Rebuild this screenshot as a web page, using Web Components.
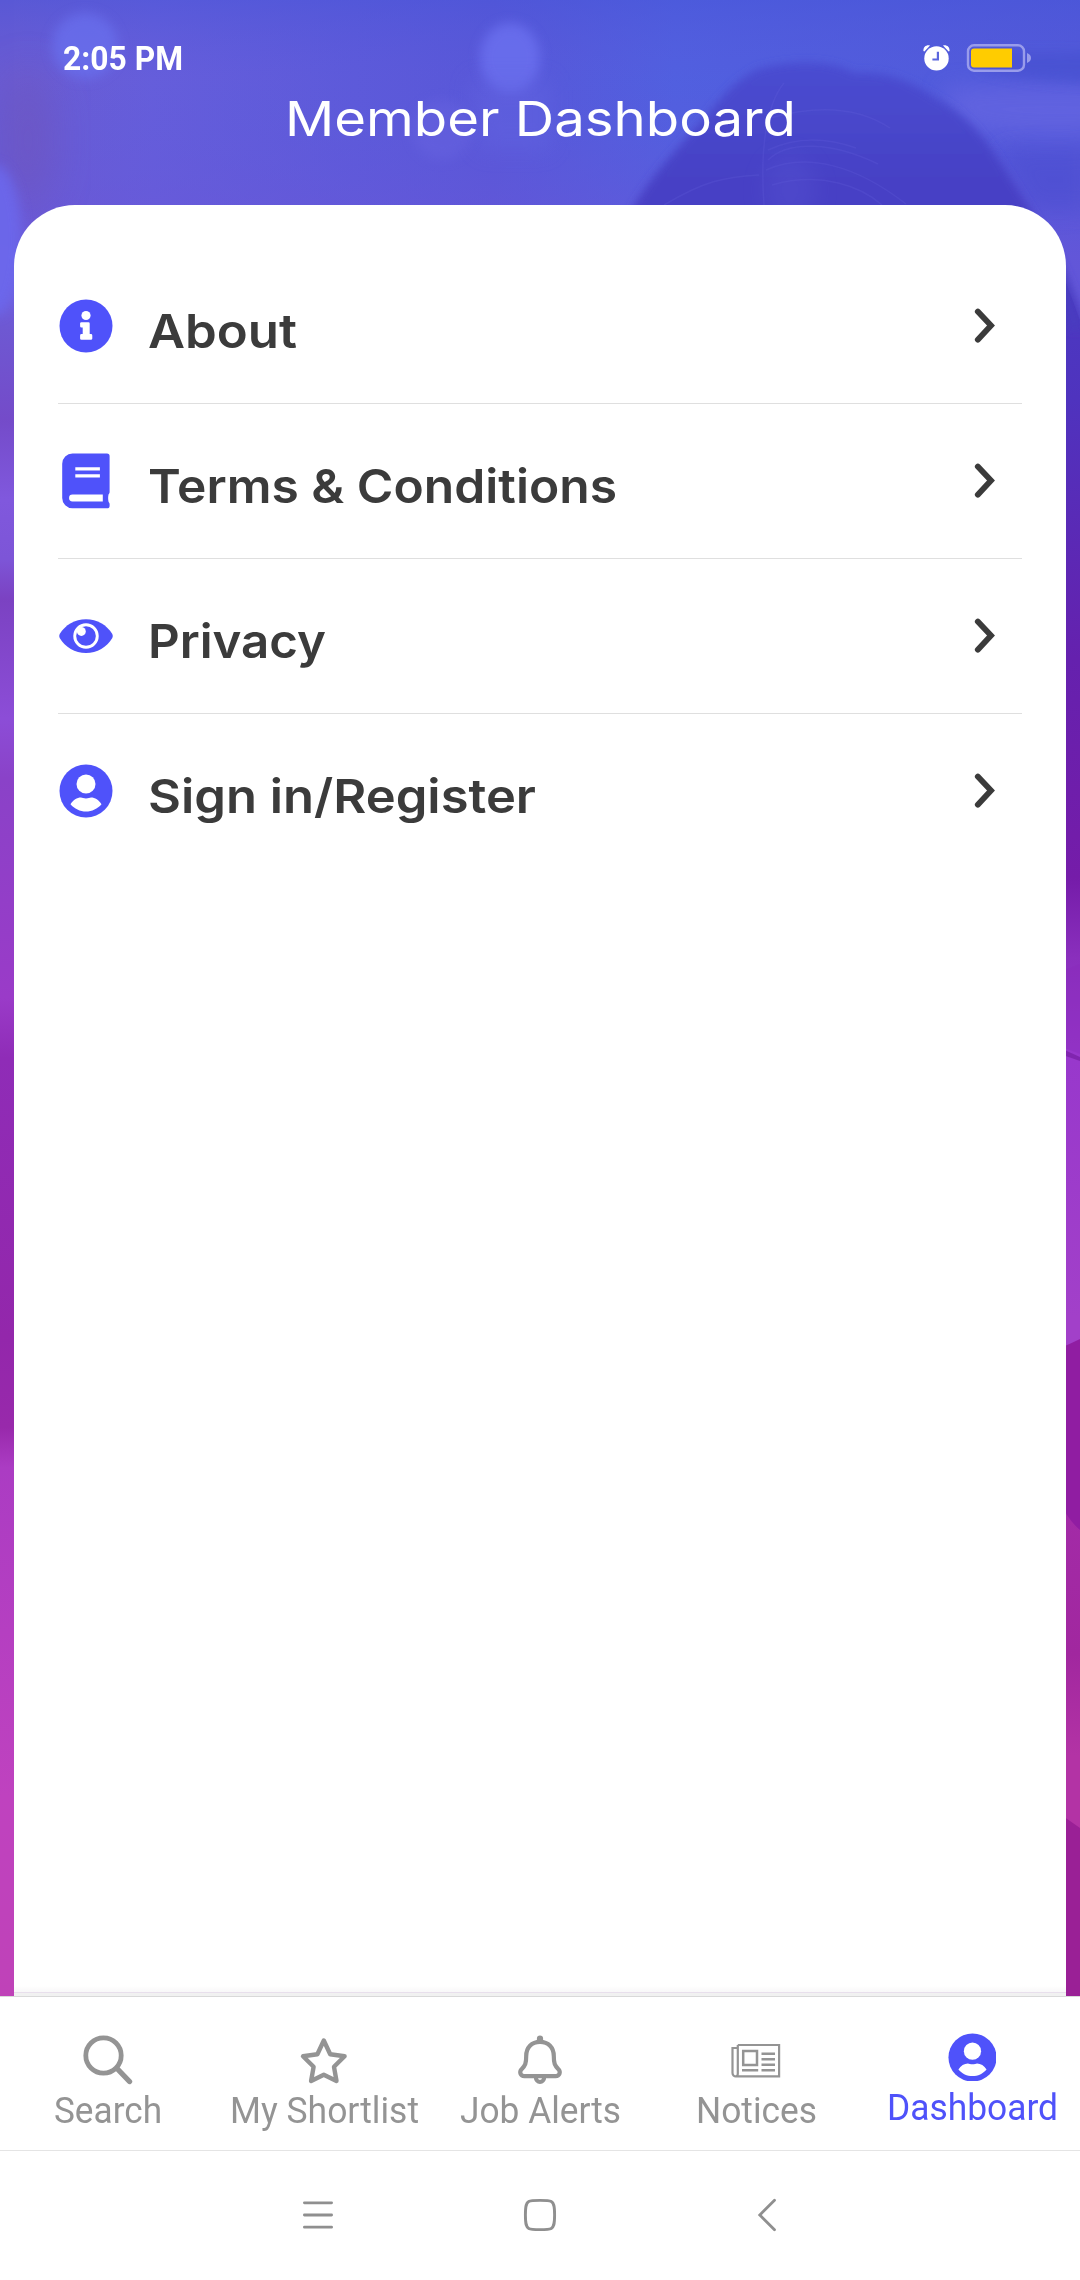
<!DOCTYPE html>
<html lang="en">
<head>
<meta charset="utf-8">
<title>Member Dashboard</title>
<style>
  body { margin: 0; }
</style>
</head>
<body>
<member-app></member-app>
<script>
// Inline icon set, each drawn at its natural pixel size.
const ICONS = {
  info: `<svg width="54" height="54" viewBox="0 0 54 54"><circle cx="27" cy="27" r="26.500" fill="currentColor"/><circle cx="27" cy="16.500" r="4.600" fill="#fff"/><path d="M22.500 23.200h7a1.200 1.200 0 0 1 1.200 1.200V35h1.200a1.400 1.400 0 0 1 1.400 1.400v3a1.400 1.400 0 0 1-1.400 1.400h-9.400a1.400 1.400 0 0 1-1.400-1.400v-3a1.400 1.400 0 0 1 1.400-1.400h1.200v-6.400h-1.200a1.400 1.400 0 0 1-1.400-1.400v-2.200a1.400 1.400 0 0 1 1.400-1.800z" fill="#fff"/></svg>`,
  book: `<svg width="54" height="56" viewBox="0 0 54 56"><path fill="currentColor" fill-rule="evenodd" d="M13.500 .5h34.500a2.600 2.600 0 0 1 2.600 2.600v36.200a2.600 2.600 0 0 1-1 2c-.6 2.200-.6 5.400 0 7.600a2.600 2.600 0 0 1 1 2v1.800a2.600 2.600 0 0 1-2.600 2.600H13.500A10.300 10.300 0 0 1 3.200 45V10.800A10.300 10.300 0 0 1 13.500 .5zM16.300 14.300v3.300h24.600v-3.300zM16.300 21.200v3.300h24.600v-3.300zM13.500 41.600a3.450 3.450 0 0 0 0 6.900H43.800v-6.900z"/></svg>`,
  eye: `<svg width="54" height="36" viewBox="0 0 56 36" style="overflow:visible"><path fill="currentColor" d="M.7 16C6.400 6.300 16.500.5 28 .5S49.600 6.300 55.300 16q1 2 0 4C49.600 29.700 39.500 35.500 28 35.500S6.400 29.700.7 20q-1-2 0-4z"/><circle cx="28" cy="18" r="11.700" fill="currentColor" stroke="#fff" stroke-width="3"/><circle cx="23.200" cy="13.300" r="4.600" fill="#fff"/></svg>`,
  user: `<svg width="54" height="54" viewBox="0 0 54 54"><circle cx="27" cy="27" r="26.500" fill="currentColor"/><circle cx="27" cy="20" r="9.500" fill="#fff"/><path fill="#fff" d="M11.500 40.200C14 36 18 33.500 22 33.500c1.200 0 2.700.9 5 .9s3.800-.9 5-.9c4 0 8 2.500 10.500 6.700C38.500 44.800 33 47.500 27 47.500s-11.500-2.700-15.500-7.300z"/></svg>`,
  chevron: `<svg width="24" height="38" viewBox="0 0 24 38"><path d="M4.800 4.500 18 18.600 4.800 32.700" fill="none" stroke="currentColor" stroke-width="5.800" stroke-linecap="round"/></svg>`,
  search: `<svg width="50" height="50" viewBox="0 0 50 50"><circle cx="20.500" cy="20.500" r="17.700" fill="none" stroke="currentColor" stroke-width="4.800"/><path d="m34.500 34 12 12.500" stroke="currentColor" stroke-width="5.400" stroke-linecap="round"/></svg>`,
  star: `<svg width="50" height="50" viewBox="0 0 50 50"><path d="m24.800 5.500 6.400 13.700 14.400 2.100-10.600 10.500 2.500 14.200-12.700-6.300-12.700 6.300 2.500-14.200L4 21.300l14.400-2.100z" fill="none" stroke="currentColor" stroke-width="4.400" stroke-linejoin="round"/></svg>`,
  bell: `<svg width="50" height="50" viewBox="0 0 50 50"><path d="M25 6.800c-8.400 0-13.800 5.800-13.800 14.200 0 7.500-.9 9.600-4.600 13.200-2.600 2.900-1.200 6.900 2.800 6.900h31.200c4 0 5.400-4 2.800-6.900-3.700-3.600-4.600-5.700-4.600-13.200C38.800 12.600 33.400 6.800 25 6.800z" fill="none" stroke="currentColor" stroke-width="4.200"/><path d="M21.900 6V3.500a3.100 3.100 0 0 1 6.200 0V6zM18.800 42.500a6.200 6.500 0 0 0 12.400 0h-4.100a2.100 2.400 0 0 1-4.200 0z" fill="currentColor"/></svg>`,
  news: `<svg width="50" height="50" viewBox="0 0 50 50"><g fill="none" stroke="currentColor" stroke-width="2.200"><path d="M6.800 10h41.300v31.400H4.800a3.300 3.300 0 0 1-3.300-3.300V13H6.800M6.800 10v28.400q0 2.700-1.600 3"/><path stroke-width="2.500" d="M12.200 15.900h13.800v14H12.200zM30.500 18.700h13.500M30.500 24.200h13.500M30.500 29.800h13.500M30.500 35.300h13.500M11 35.300H27.200"/></g></svg>`,
  menu: `<svg width="32" height="32" viewBox="0 0 32 32"><path d="M2.400 3.800h27.200M2.400 16h27.200M2.400 28.200h27.200" stroke="currentColor" stroke-width="2.800" stroke-linecap="round"/></svg>`,
  home: `<svg width="34" height="34" viewBox="0 0 34 34"><path d="M17 2.400c6.500 0 9.500.2 11.300 1.200 2.300 1.300 3.300 3.500 3.300 13.400s-1 12.100-3.300 13.400c-1.800 1-4.800 1.200-11.300 1.200s-9.500-.2-11.300-1.200C3.400 29.100 2.400 26.900 2.400 17s1-12.100 3.300-13.400C7.500 2.600 10.500 2.400 17 2.400z" fill="none" stroke="currentColor" stroke-width="2.900"/></svg>`,
  back: `<svg width="22" height="34" viewBox="0 0 22 34"><path d="M18.500 2.200 3.800 17l14.700 14.800" fill="none" stroke="currentColor" stroke-width="2.800" stroke-linecap="round"/></svg>`,
  alarm: `<svg width="28" height="28" viewBox="0 0 28 28"><circle cx="13.500" cy="14.400" r="12.200" fill="#fff"/><path d="M.4 7C.3 3 3 .800 7 1.500L1.400 7.600zM26.600 7C26.700 3 24 .800 20 1.500l5.600 6.100z" fill="#fff"/><path d="M14.900 7.800v7.700H9.400" fill="none" stroke="#5b66dd" stroke-width="2.200"/></svg>`,
  battery: `<svg width="67" height="30" viewBox="0 0 67 30"><rect x="2" y="2.300" width="56" height="25.400" rx="6" fill="none" stroke="#999ceb" stroke-width="2.400"/><path d="M61 10q4 1.700 4 5t-4 5z" fill="#999ceb"/><path d="M8 5.600h38v18.800H8a3 3 0 0 1-3-3V8.600a3 3 0 0 1 3-3z" fill="#fc0"/></svg>`
};

class BaseElement extends HTMLElement {
  constructor() { super(); this.attachShadow({ mode: 'open' }); }
  connectedCallback() { this.shadowRoot.innerHTML = this.render(); }
}

customElements.define('app-icon', class extends BaseElement {
  render() { return `<style>:host{display:flex;flex:none}svg{display:block}</style>${ICONS[this.getAttribute('name')]}`; }
});

// Single line of text whose advance is stretched to a set width.
customElements.define('fit-text', class extends BaseElement {
  render() { return `<style>:host{display:block;flex:none;white-space:nowrap}span{display:inline-block;transform-origin:0 50%}</style><span>${this.getAttribute('text')}</span>`; }
  connectedCallback() {
    super.connectedCallback();
    const span = this.shadowRoot.querySelector('span');
    const width = +this.getAttribute('width');
    this.style.width = width + 'px';
    span.style.transform = `scaleX(${width / span.getBoundingClientRect().width})`;
  }
});

customElements.define('photo-backdrop', class extends BaseElement {
  render() { return `<style>:host{display:block;position:absolute;inset:0;overflow:hidden}svg{display:block}</style>
  <svg width="1080" height="1996" viewBox="0 0 1080 1996">
    <defs>
      <linearGradient id="l" x2="0" y2="1">
        <stop offset="0" stop-color="#5957d6"/><stop offset=".12" stop-color="#6d68ea"/><stop offset=".165" stop-color="#6e58d2"/><stop offset=".21" stop-color="#744bc9"/><stop offset=".25" stop-color="#8058dd"/><stop offset=".28" stop-color="#7d55d7"/><stop offset=".3" stop-color="#7b42c2"/><stop offset=".36" stop-color="#8c4dd7"/><stop offset=".39" stop-color="#8a42c8"/><stop offset=".5" stop-color="#9a3bc8"/><stop offset=".53" stop-color="#8f2cb7"/><stop offset=".67" stop-color="#9327ab"/><stop offset=".715" stop-color="#9829ab"/><stop offset=".735" stop-color="#ab3cc3"/><stop offset=".9" stop-color="#bf42bf"/><stop offset="1" stop-color="#bf42b8"/>
      </linearGradient>
      <linearGradient id="r" x2="0" y2="1">
        <stop offset="0" stop-color="#5b50d8"/><stop offset=".13" stop-color="#4a3ac2"/><stop offset=".2" stop-color="#4f33be"/><stop offset=".33" stop-color="#6521ae"/><stop offset=".44" stop-color="#751ca9"/><stop offset=".48" stop-color="#8a2fbd"/><stop offset=".53" stop-color="#9838cc"/><stop offset=".66" stop-color="#a240c9"/>
      </linearGradient>
      <linearGradient id="r2" x2="0" y2="1"><stop offset="0" stop-color="#a32ba8"/><stop offset=".45" stop-color="#a1279f"/><stop offset=".75" stop-color="#b333a5"/></linearGradient>
      <linearGradient id="t"><stop offset="0" stop-color="#6b5cd2"/><stop offset=".13" stop-color="#665edb"/><stop offset=".32" stop-color="#5d5ada"/><stop offset=".45" stop-color="#5857d8"/><stop offset=".62" stop-color="#5060e0"/><stop offset="1" stop-color="#5058d9"/></linearGradient>
      <linearGradient id="v" x2="0" y2="1"><stop offset="0" stop-color="#4855d8" stop-opacity=".5"/><stop offset=".25" stop-color="#5a5ada" stop-opacity=".08"/><stop offset=".8" stop-color="#6e55d8" stop-opacity=".6"/></linearGradient>
      <linearGradient id="h" x2="0" y2="1"><stop offset="0" stop-color="#494dd1"/><stop offset=".4" stop-color="#4742c6"/><stop offset="1" stop-color="#4a3abf"/></linearGradient>
      <filter id="b6" x="-50%" y="-50%" width="200%" height="200%"><feGaussianBlur stdDeviation="6"/></filter>
      <filter id="b12" x="-50%" y="-50%" width="200%" height="200%"><feGaussianBlur stdDeviation="11"/></filter>
      <filter id="b20" x="-80%" y="-80%" width="260%" height="260%"><feGaussianBlur stdDeviation="20"/></filter>
      <filter id="b3"><feGaussianBlur stdDeviation="4"/></filter>
    </defs>
    <rect width="540" height="1996" fill="url(#l)"/>
    <rect x="540" width="540" height="1996" fill="url(#r)"/>
    <path d="M1060 972l20-8v90l-20-8z" fill="#8a2bbb" opacity=".4"/>
    <path d="M1060 1048l20 9v4l-20-7z" fill="#7a20a8" opacity=".8"/>
    <path d="M1060 1348q10-4 20-9v300h-20z" fill="#901da2"/>
    <path d="M1060 1502q8 18 20 28v310h-20z" fill="url(#r2)"/>
    <path d="M1060 1814l20 14v168h-20z" fill="#9a2096"/>
    <path d="M14 0h1066v320l-26-70H14z" fill="url(#t)"/>
    <path d="M0 0h14v250H0z" fill="#6a5bd2"/>
    <path d="M0 0h1080v320l-26-70H0z" fill="url(#v)"/>
    <ellipse cx="28" cy="140" rx="24" ry="70" fill="#7052b8" opacity=".55" filter="url(#b20)"/>
    <ellipse cx="-4" cy="240" rx="26" ry="75" fill="#6c68ec" opacity=".9" filter="url(#b6)"/>
    <circle cx="85" cy="46" r="33" fill="#6970ee" opacity=".75" filter="url(#b6)"/>
    <ellipse cx="510" cy="58" rx="30" ry="35" fill="#6b70ef" opacity=".85" filter="url(#b6)"/>
    <path d="M470 80h80v70h-70z" fill="#6465e2" opacity=".45" filter="url(#b12)"/>
    <circle cx="442" cy="130" r="30" fill="#6a66e2" opacity=".4" filter="url(#b6)"/>
    <path d="M940 88q80-6 170-3v50q-110 5-150-10z" fill="#6666e2" opacity=".7" filter="url(#b12)"/>
    <path d="M980 52q60 2 120 0v32q-80-4-120-14z" fill="#444fcf" opacity=".6" filter="url(#b6)"/>
    <path d="M1000 150h90v60h-60z" fill="#4a4ccf" opacity=".55" filter="url(#b12)"/>
    <path d="M622 230c22-52 60-84 96-128 12-14 22-24 40-33 40-10 75-8 96 4 35-2 55 8 80 24 45 24 62 58 90 102 18 30 44 66 62 131h-20l-20-90z" fill="url(#h)" filter="url(#b3)"/>
    <g fill="none" stroke="#6862dd" stroke-width="1.500" opacity=".22">
      <path d="M764 205c-4-55 2-100 20-122M768 160c20-20 65-18 110 4M766 170c40-18 90-5 140 34M768 150c30-14 60-12 88-2M664 205c40-24 60-28 95-30M772 185c50-14 90 2 110 20M770 118c50-14 90-10 120 10"/>
    </g>
    <ellipse cx="790" cy="190" rx="26" ry="34" fill="#5c58d6" opacity=".3" filter="url(#b12)"/>
  </svg>`; }
});

customElements.define('status-bar', class extends BaseElement {
  render() { return `<style>
    :host{display:flex;height:80px;box-sizing:border-box;padding:36px 47px 0 63px;color:#fff;align-items:flex-start}
    fit-text{font:700 32.500px/46px Roboto,sans-serif}
    .r{margin-left:auto;display:flex;gap:15px;padding-top:7px;align-items:center}
  </style><fit-text text="2:05 PM" width="120"></fit-text><div class="r"><app-icon name="alarm"></app-icon><app-icon name="battery"></app-icon></div>`; }
});

customElements.define('menu-row', class extends BaseElement {
  render() { return `<style>
    :host{display:flex;height:155px;box-sizing:border-box;border-bottom:1px solid #dfdfdf;align-items:center;color:#3b3b3b}
    :host([last]){border-color:transparent}
    .i{width:54px;display:flex;justify-content:center;color:#4f52fa;margin-left:.5px}
    fit-text{font:600 47px/60px Inter,sans-serif;margin:10px 0 0 35.500px}
    .c{margin:0 25px 0 auto}
  </style><div class="i"><app-icon name="${this.getAttribute('icon')}"></app-icon></div>
  <fit-text text="${this.getAttribute('label')}" width="${this.getAttribute('width')}"></fit-text>
  <app-icon class="c" name="chevron"></app-icon>`; }
});

customElements.define('menu-card', class extends BaseElement {
  render() { return `<style>
    :host{display:block;margin:57px 14px 0;height:1791px;box-sizing:border-box;background:linear-gradient(#fff 0 1781px,#f8f7f8 1787px,#e8dfec 1787px 1788px,#f1f1f1 1788px);border-radius:61px 61px 0 0;padding:44px 44px 0}
  </style><slot></slot>`; }
});

customElements.define('tab-item', class extends BaseElement {
  render() { return `<style>
    :host{display:flex;flex:1 1 0;min-width:0;flex-direction:column;align-items:center;padding-top:38px;color:#949494}
    :host([active]){color:#4f52fa;padding-top:35px}
    .i{height:50px;display:flex;align-items:center}
    :host([active]) app-icon{zoom:.907}
    fit-text{font:400 36px/44px Roboto,sans-serif;margin-top:4px}
  </style><div class="i"><app-icon name="${this.getAttribute('icon')}"></app-icon></div>
  <fit-text text="${this.getAttribute('label')}" width="${this.getAttribute('width')}"></fit-text>`; }
});

customElements.define('tab-bar', class extends BaseElement {
  render() { return `<style>:host{display:flex;height:155px;box-sizing:border-box;border-top:1px solid #d9d9d9;border-bottom:1px solid #e4e4e4;background:#fff}</style><slot></slot>`; }
});

customElements.define('system-nav', class extends BaseElement {
  render() { return `<style>:host{display:grid;grid-template-columns:221px 233px 22px;height:127px;box-sizing:border-box;align-items:center;padding-left:302px;color:#8f8f8f;background:#fff}</style>
  <app-icon name="menu"></app-icon><app-icon name="home"></app-icon><app-icon name="back"></app-icon>`; }
});

customElements.define('member-app', class extends BaseElement {
  render() { return `<style>
    :host{display:block;width:1080px;height:2280px;background:#fff;overflow:hidden}
    .screen{position:relative;height:1996px;overflow:hidden}
    .content{position:relative}
    header{height:68px;display:flex;justify-content:center;color:#fff}
    header fit-text{font:400 48.500px/60px Inter,sans-serif;margin-top:9px}
  </style>
  <div class="screen"><photo-backdrop></photo-backdrop><div class="content">
    <status-bar></status-bar>
    <header><fit-text text="Member Dashboard" width="511"></fit-text></header>
    <menu-card>
      <menu-row icon="info" label="About" width="149"></menu-row>
      <menu-row icon="book" label="Terms &amp;amp; Conditions" width="469"></menu-row>
      <menu-row icon="eye" label="Privacy" width="178"></menu-row>
      <menu-row icon="user" label="Sign in/Register" width="388" last></menu-row>
    </menu-card>
  </div></div>
  <tab-bar>
    <tab-item icon="search" label="Search" width="108"></tab-item>
    <tab-item icon="star" label="My Shortlist" width="189"></tab-item>
    <tab-item icon="bell" label="Job Alerts" width="161"></tab-item>
    <tab-item icon="news" label="Notices" width="121"></tab-item>
    <tab-item icon="user" label="Dashboard" width="171" active></tab-item>
  </tab-bar>
  <system-nav></system-nav>`; }
});
</script>
</body>
</html>
